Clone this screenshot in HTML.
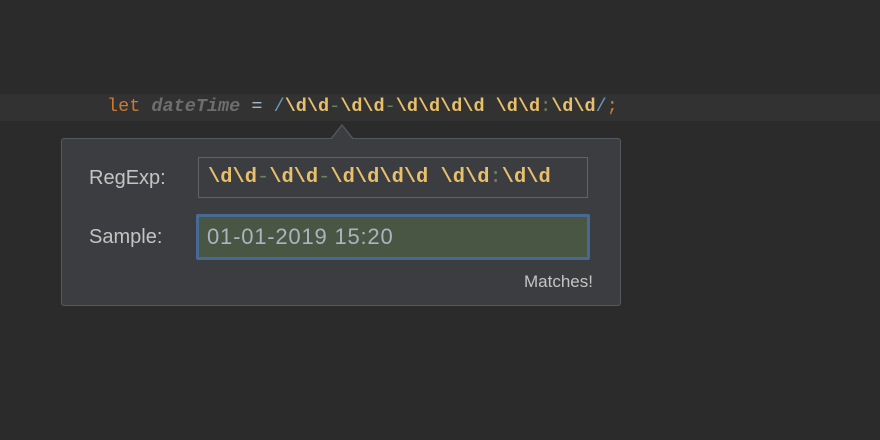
<html><head><style>
body{margin:0;width:880px;height:440px;background:#2b2b2b;position:relative;overflow:hidden;font-family:"Liberation Sans",sans-serif}
.hl{position:absolute;left:0;top:94px;width:880px;height:27px;background:#323232}
.code{position:absolute;left:107px;top:96px;font:bold 18.5px/22px "Liberation Mono",monospace;color:#e8bf6a;white-space:pre}
.k{color:#cc7832;font-weight:normal}.v{color:#6e6e6e;font-style:italic}.o{color:#a9b7c6;font-weight:normal}.s{color:#6a8759;font-weight:normal}.sl{color:#6897bb;font-weight:normal}
.pop{position:absolute;left:61px;top:138px;width:558px;height:166px;background:#3c3d40;border:1px solid #57585b;border-radius:3px}
.arr{position:absolute;left:330px;top:124px;width:0;height:0;border-left:12px solid transparent;border-right:12px solid transparent;border-bottom:15px solid #57585b}
.arr2{position:absolute;left:331px;top:126px;border-left:11px solid transparent;border-right:11px solid transparent;border-bottom:14px solid #3c3d40}
.lab{position:absolute;font-size:20px;color:#c4c4c4}
.f1{position:absolute;left:198px;top:157px;width:388px;height:39px;border:1px solid #626366;box-sizing:content-box}
.f1>span{position:absolute;left:9px;top:8px;font:bold 20.4px/24px "Liberation Mono",monospace;color:#e8bf6a;white-space:pre}
.f2{position:absolute;left:196px;top:214px;width:388px;height:40px;background:#495643;border:3px solid #466a94;border-radius:2px}
.f2>span{position:absolute;left:8px;top:7px;font-size:22px;letter-spacing:0.8px;color:#a9b4c0}
.m{position:absolute;right:287px;top:272px;font-size:17px;color:#c4c4c4}
</style></head><body>
<div class="hl"></div>
<div class="code"><span class="k">let</span> <span class="v">dateTime</span> <span class="o">=</span> <span class="sl">/</span>\d\d<span class="s">-</span>\d\d<span class="s">-</span>\d\d\d\d \d\d<span class="s">:</span>\d\d<span class="sl">/</span><span class="k">;</span></div>
<div class="arr"></div>
<div class="pop"></div>
<div class="arr2"></div>
<div class="lab" style="left:89px;top:167px">RegExp:</div>
<div class="lab" style="left:89px;top:226px">Sample:</div>
<div class="f1"><span>\d\d<span style="color:#6a8759;font-weight:normal">-</span>\d\d<span style="color:#6a8759;font-weight:normal">-</span>\d\d\d\d \d\d<span style="color:#6a8759;font-weight:normal">:</span>\d\d</span></div>
<div class="f2"><span>01-01-2019 15:20</span></div>
<div class="m">Matches!</div>
</body></html>
